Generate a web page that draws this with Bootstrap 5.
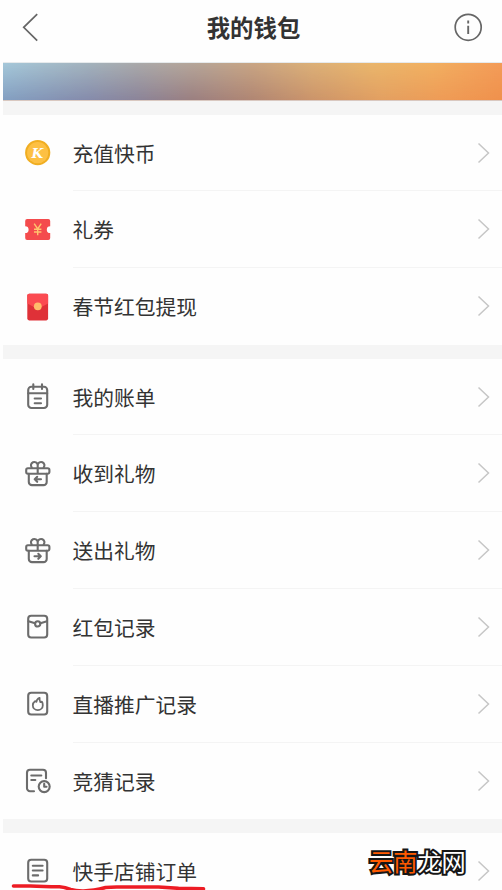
<!DOCTYPE html>
<html lang="zh-CN">
<head>
<meta charset="utf-8">
<meta name="viewport" content="width=device-width, initial-scale=1">
<title>我的钱包</title>
<link href="https://cdn.jsdelivr.net/npm/bootstrap@5.3.0/dist/css/bootstrap.min.css" rel="stylesheet">
<style>
html, body { height: 100%; overflow: hidden; }
body { font-family: "Noto Sans CJK SC", sans-serif; color: #333; background: #fefefe; }
.screen { height: 890px; overflow: hidden; padding-left: 3px; }
.top-bar { height: 62px; padding: 0 19px 8px 19px; flex: none; }
.top-bar h1 { font-size: 23.4px; font-weight: 700; line-height: 34px; padding-left: 2px; }
.banner { height: 39.1px; flex: none; border-top: 1px solid #e6eaec; border-bottom: 1px solid #d9c8c0; position: relative;
  background: linear-gradient(90deg, #a5c8da 0%, #a3b3bd 17%, #aaa9aa 27%, #b8a596 40%, #c9a584 50%, #dcb078 62%, #eab66c 74%, #f2b061 86%, #f49b58 100%); }
.banner::after { content: ""; position: absolute; inset: 0;
  background: linear-gradient(90deg, #839fc1 0%, #858bab 17%, #8b8499 27%, #9b7f80 38%, #b08673 50%, #cb946a 62%, #e3a061 76%, #ee9b56 88%, #ef914c 100%);
  -webkit-mask-image: linear-gradient(to bottom, transparent, #000); mask-image: linear-gradient(to bottom, transparent, #000); }
.gap-band { height: 13.6px; flex: none; background: #f5f5f5; }
.wallet-row { height: 76.8px; flex: none; padding-left: 19px; }
.wallet-row > svg { width: 32px; height: 32px; flex: none; margin-right: 18.5px; }
.row-body { font-size: 20.75px; line-height: 30px; padding-right: 12px; border-bottom: 1px solid #f4f4f4; }
.wallet-row.last-row .row-body { border-color: transparent; }
.chev { width: 13px; height: 22px; fill: none; stroke: #c6c6c6; stroke-width: 1.5; }
.ln { fill: none; stroke: #6c6c6c; stroke-width: 2.1; stroke-linecap: round; stroke-linejoin: round; }
.coin-k { font: italic bold 13.5px "DejaVu Serif", serif; fill: #fff; }
.site-mark { position: absolute; left: 369px; top: 843px; font-size: 24.2px; line-height: 36px; font-weight: 400; color: #fff;
  -webkit-text-stroke: 4px #161616; paint-order: stroke fill; white-space: nowrap; }
.site-mark span { color: #ff5a00; }
.scribble { position: absolute; left: 0; top: 875px; width: 220px; height: 15px; fill: none; stroke: #ed1c24; stroke-width: 3.6; stroke-linecap: round; stroke-linejoin: round; }
</style>
<script src="https://cdn.jsdelivr.net/npm/bootstrap@5.3.0/dist/js/bootstrap.bundle.min.js"></script>
</head>
<body>
<main class="screen d-flex flex-column position-relative">
  <header class="top-bar d-flex align-items-center justify-content-between">
    <svg width="30" height="30" viewBox="22 12 30 30" fill="none" stroke="#666" stroke-width="1.7"><path d="M37.2 14.2 23.7 27.3l13.5 13.4"/></svg>
    <h1 class="m-0">我的钱包</h1>
    <svg width="30" height="30" viewBox="453 12 30 30" fill="none" stroke="#666" stroke-width="1.7"><circle cx="468.2" cy="27.3" r="13"/><path d="M468.2 25.8v8.2M468.2 20.6v3" stroke-width="1.9"/></svg>
  </header>
  <div class="banner"></div>
  <div class="gap-band"></div>

  <div class="wallet-row d-flex align-items-center">
    <svg viewBox="22 -16 32 32"><circle cx="37.7" cy="-.3" r="12.6" fill="#f0ae22"/><circle cx="37.7" cy="-.3" r="10.6" fill="#fdc043"/><text class="coin-k" x="37.4" y="4.6" text-anchor="middle">K</text></svg>
    <div class="row-body d-flex flex-fill h-100 align-items-center justify-content-between"><span>充值快币</span><svg class="chev" viewBox="0 0 13 22"><path d="m1.5 1.5 10 9.5-10 9.5"/></svg></div>
  </div>
  <div class="wallet-row d-flex align-items-center">
    <svg viewBox="22 -16 32 32"><path d="M27.3-11h20.8a2 2 0 0 1 2.1 2v5.3a3.4 3.4 0 0 0 0 6.8V8.1a2 2 0 0 1-2.1 2H27.3a2 2 0 0 1-2.1-2V3.1a3.4 3.4 0 0 0 0-6.8V-9a2 2 0 0 1 2.1-2z" fill="#f44b4d"/><path d="m34.2-6.4 3.5 5.4 3.5-5.4M37.7-1v6.3M34-.8h7.4M34 2h7.4" fill="none" stroke="#ffc46e" stroke-width="1.4"/></svg>
    <div class="row-body d-flex flex-fill h-100 align-items-center justify-content-between"><span>礼券</span><svg class="chev" viewBox="0 0 13 22"><path d="m1.5 1.5 10 9.5-10 9.5"/></svg></div>
  </div>
  <div class="wallet-row last-row d-flex align-items-center">
    <svg viewBox="22 -16 32 32"><rect x="27.3" y="-13.3" width="20.8" height="26.7" rx="1.8" fill="#df3138"/><path d="M27.3-3.5v-8a1.8 1.8 0 0 1 1.8-1.8h17.2a1.8 1.8 0 0 1 1.8 1.8v8L39 1.3q-1.3.7-2.6 0z" fill="#fb4b51"/><circle cx="37.8" cy="-.7" r="3.9" fill="#ffbd6b"/></svg>
    <div class="row-body d-flex flex-fill h-100 align-items-center justify-content-between"><span>春节红包提现</span><svg class="chev" viewBox="0 0 13 22"><path d="m1.5 1.5 10 9.5-10 9.5"/></svg></div>
  </div>
  <div class="gap-band"></div>

  <div class="wallet-row d-flex align-items-center">
    <svg class="ln" viewBox="22 -16 32 32"><rect x="28.2" y="-10.2" width="19" height="21.2" rx="3.2"/><path d="M28.2-3.7h19M33.3-12.7v4.6M42-12.7v4.6M34.7 1.5h6.3M34.7 6.2h6.3"/></svg>
    <div class="row-body d-flex flex-fill h-100 align-items-center justify-content-between"><span>我的账单</span><svg class="chev" viewBox="0 0 13 22"><path d="m1.5 1.5 10 9.5-10 9.5"/></svg></div>
  </div>
  <div class="wallet-row d-flex align-items-center">
    <svg class="ln" viewBox="22 -16 32 32"><rect x="26.2" y="-5.7" width="23.2" height="5.4" rx="1.7"/><path d="M28.8-.3v8.2a3.2 3.2 0 0 0 3.2 3.2h11.5a3.2 3.2 0 0 0 3.2-3.2V-.3M37.7-6v5M37.7-6v-3.2a3.4 3.4 0 1 0-6 2.7M37.7-9.2a3.4 3.4 0 1 1 6 2.7M41 5.3h-6.3M37.2 2.8l-2.5 2.5 2.5 2.5"/></svg>
    <div class="row-body d-flex flex-fill h-100 align-items-center justify-content-between"><span>收到礼物</span><svg class="chev" viewBox="0 0 13 22"><path d="m1.5 1.5 10 9.5-10 9.5"/></svg></div>
  </div>
  <div class="wallet-row d-flex align-items-center">
    <svg class="ln" viewBox="22 -16 32 32"><rect x="26.2" y="-5.7" width="23.2" height="5.4" rx="1.7"/><path d="M28.8-.3v8.2a3.2 3.2 0 0 0 3.2 3.2h11.5a3.2 3.2 0 0 0 3.2-3.2V-.3M37.7-6v5M37.7-6v-3.2a3.4 3.4 0 1 0-6 2.7M37.7-9.2a3.4 3.4 0 1 1 6 2.7M34.5 5.3h6.3M38.3 2.8l2.5 2.5-2.5 2.5"/></svg>
    <div class="row-body d-flex flex-fill h-100 align-items-center justify-content-between"><span>送出礼物</span><svg class="chev" viewBox="0 0 13 22"><path d="m1.5 1.5 10 9.5-10 9.5"/></svg></div>
  </div>
  <div class="wallet-row d-flex align-items-center">
    <svg class="ln" viewBox="22 -16 32 32"><rect x="28.2" y="-11.3" width="19" height="21.8" rx="3"/><circle cx="37.7" cy="-3.1" r="2.6"/><path d="m28.5-5.7 6.5 2M47-5.7l-6.6 2"/></svg>
    <div class="row-body d-flex flex-fill h-100 align-items-center justify-content-between"><span>红包记录</span><svg class="chev" viewBox="0 0 13 22"><path d="m1.5 1.5 10 9.5-10 9.5"/></svg></div>
  </div>
  <div class="wallet-row d-flex align-items-center">
    <svg class="ln" viewBox="22 -16 32 32"><rect x="28.2" y="-11.3" width="19" height="21.8" rx="3"/><path stroke-width="1.8" d="M39.6-6.2c-1.8.8-3 2-3.2 4-.4-.4-.9-.6-1.4-.6-1.400 1-2.200 2.400-2.200 4a5 5 0 0 0 10 0c0-1.500-.3-2.600-1-3.600-.4.400-.9.600-1.400.600-.800-1.300-1-2.700-.800-4.400z"/></svg>
    <div class="row-body d-flex flex-fill h-100 align-items-center justify-content-between"><span>直播推广记录</span><svg class="chev" viewBox="0 0 13 22"><path d="m1.5 1.5 10 9.5-10 9.5"/></svg></div>
  </div>
  <div class="wallet-row last-row d-flex align-items-center">
    <svg class="ln" viewBox="22 -16 32 32"><path d="M34 10.2h-4a3 3 0 0 1-3-3V-8.2a3 3 0 0 1 3-3h13a3 3 0 0 1 3 3v5.400M31.300-5.500h10M31.300-1h4"/><circle cx="44.200" cy="5.600" r="5.500"/><path d="M44.200 2.700v3h2.300"/></svg>
    <div class="row-body d-flex flex-fill h-100 align-items-center justify-content-between"><span>竞猜记录</span><svg class="chev" viewBox="0 0 13 22"><path d="m1.500 1.500 10 9.500-10 9.500"/></svg></div>
  </div>
  <div class="gap-band"></div>

  <div class="wallet-row last-row d-flex align-items-center">
    <svg class="ln" viewBox="22 -16 32 32"><rect x="28.200" y="-11.300" width="19" height="21.800" rx="3"/><path d="M32.800-5.200h9.800M32.800-.5h9.800M32.800 4.400h5.300"/></svg>
    <div class="row-body d-flex flex-fill h-100 align-items-center justify-content-between"><span>快手店铺订单</span><svg class="chev" viewBox="0 0 13 22"><path d="m1.500 1.500 10 9.500-10 9.500"/></svg></div>
  </div>

  <svg class="scribble" viewBox="0 875 220 15"><path d="M13.500 886h17q12 .8 29 .8 6 .5 11 2.700 5 1.600 13 1.500 10-.3 22-3.500l11-.5h42l20 1.300 25 .5"/></svg>
  <div class="site-mark"><span>云南</span>龙网</div>
</main>
</body>
</html>
